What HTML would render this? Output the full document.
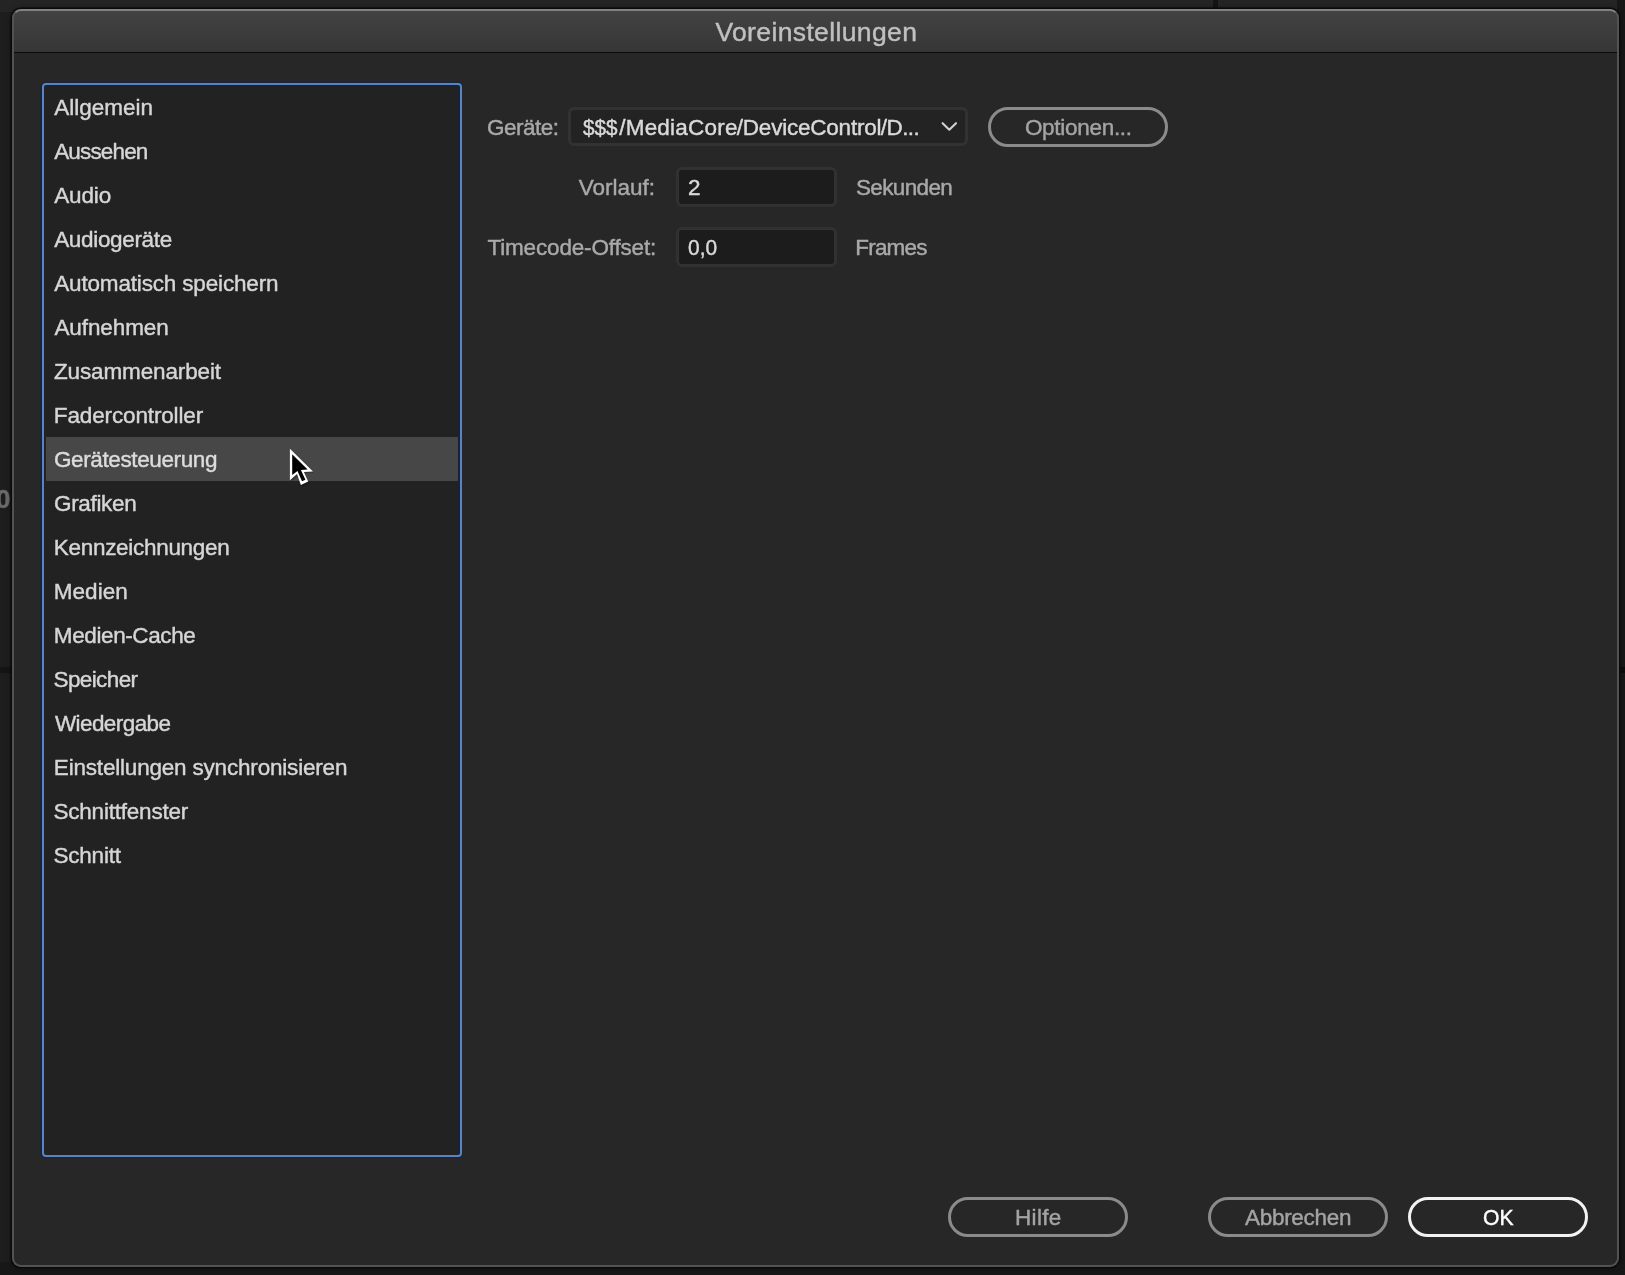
<!DOCTYPE html>
<html lang="de"><head><meta charset="utf-8"><title>Voreinstellungen</title>
<style>
html,body{margin:0;padding:0}
body{width:1625px;height:1275px;overflow:hidden;background:#1d1d1d;position:relative;font-family:"Liberation Sans",sans-serif}
.t{position:absolute;white-space:nowrap;line-height:1;height:1.3em;display:block;-webkit-text-stroke:0.42px currentColor}
.abs{position:absolute}
#wrap{position:absolute;left:0;top:0;width:1625px;height:1275px;will-change:transform}
#dlg{position:absolute;left:12px;top:9px;width:1607px;height:1258px;border-radius:9px;background:#272727;box-shadow:0 0 0 1.5px #0a0a0a,0 0 4px 1px rgba(0,0,0,.45);overflow:hidden}
#tb{position:absolute;left:0;top:0;width:100%;height:43px;background:linear-gradient(#434343,#363636)}
#tbl{position:absolute;left:0;top:42.6px;width:100%;height:1.7px;background:#0a0a0a}
#rim{position:absolute;left:12px;top:9px;width:1607px;height:1258px;border-radius:9px;box-sizing:border-box;border:2px solid #525252;border-top:2px solid #828282;pointer-events:none}
#list{position:absolute;left:42px;top:83px;width:420px;height:1074px;box-sizing:border-box;border:2px solid #5a83c4;border-radius:4px;background:#222222;box-shadow:-1.5px 0 0 0 rgba(8,36,86,.85), inset -1.5px 0 0 0 rgba(8,36,86,.85), 0 -1px 0 0 rgba(8,36,86,.5), 0 1px 0 0 rgba(8,36,86,.5)}
#sel{position:absolute;left:46px;top:437px;width:412px;height:44px;background:#474747}
.btn{position:absolute;box-sizing:border-box;width:180px;height:40px;border:3px solid #8b8b8b;border-radius:20px}
.inp{position:absolute;box-sizing:border-box;background:#1c1c1c;border:3px solid #313131;border-radius:6px}
</style></head><body>
<div id="wrap">
<div class="abs" style="left:0;top:0;width:1625px;height:12px;background:#242424"></div>
<div class="abs" style="left:0;top:1262px;width:1625px;height:13px;background:#171717"></div>
<div class="abs" style="left:1213px;top:0;width:5px;height:8px;background:#141414"></div>
<div class="abs" style="left:0;top:667px;width:14px;height:6px;background:#141414"></div>
<div class="abs" style="left:1617px;top:0;width:8px;height:1275px;background:#171717"></div>
<div class="abs" style="left:1617px;top:667px;width:8px;height:6px;background:#0c0c0c"></div>
<span class="t" style="left:-4px;top:486px;font-size:26px;color:#6a6a6a;font-weight:bold">0</span>
<div id="dlg"><div id="tb"></div><div id="tbl"></div></div>
<div id="rim"></div>
<div id="list"></div>
<div id="sel"></div>

<span class="t" style="left:715.45px;top:18.77px;font-size:26.5px;color:#c0c0c0;letter-spacing:0.366px;">Voreinstellungen</span>
<span class="t" style="left:54.20px;top:97.00px;font-size:22.5px;color:#d6d6d6;letter-spacing:0.018px;">Allgemein</span>
<span class="t" style="left:54.14px;top:141.00px;font-size:22.5px;color:#d6d6d6;letter-spacing:-0.835px;">Aussehen</span>
<span class="t" style="left:54.20px;top:185.00px;font-size:22.5px;color:#d6d6d6;letter-spacing:-0.128px;">Audio</span>
<span class="t" style="left:54.20px;top:229.00px;font-size:22.5px;color:#d6d6d6;letter-spacing:-0.331px;">Audiogeräte</span>
<span class="t" style="left:54.20px;top:273.00px;font-size:22.5px;color:#d6d6d6;letter-spacing:-0.163px;">Automatisch speichern</span>
<span class="t" style="left:54.45px;top:317.00px;font-size:22.5px;color:#d6d6d6;letter-spacing:-0.101px;">Aufnehmen</span>
<span class="t" style="left:53.92px;top:361.00px;font-size:22.5px;color:#d6d6d6;letter-spacing:-0.125px;">Zusammenarbeit</span>
<span class="t" style="left:53.82px;top:405.00px;font-size:22.5px;color:#d6d6d6;letter-spacing:-0.137px;">Fadercontroller</span>
<span class="t" style="left:53.98px;top:449.00px;font-size:22.5px;color:#dcdcdc;letter-spacing:-0.381px;">Gerätesteuerung</span>
<span class="t" style="left:53.98px;top:493.00px;font-size:22.5px;color:#d6d6d6;letter-spacing:-0.337px;">Grafiken</span>
<span class="t" style="left:53.82px;top:537.00px;font-size:22.5px;color:#d6d6d6;letter-spacing:-0.301px;">Kennzeichnungen</span>
<span class="t" style="left:53.82px;top:581.00px;font-size:22.5px;color:#d6d6d6;letter-spacing:0.020px;">Medien</span>
<span class="t" style="left:53.82px;top:625.00px;font-size:22.5px;color:#d6d6d6;letter-spacing:-0.392px;">Medien-Cache</span>
<span class="t" style="left:53.49px;top:669.00px;font-size:22.5px;color:#d6d6d6;letter-spacing:-0.606px;">Speicher</span>
<span class="t" style="left:54.91px;top:713.00px;font-size:22.5px;color:#d6d6d6;letter-spacing:-0.578px;">Wiedergabe</span>
<span class="t" style="left:53.82px;top:757.00px;font-size:22.5px;color:#d6d6d6;letter-spacing:-0.190px;">Einstellungen synchronisieren</span>
<span class="t" style="left:53.49px;top:801.00px;font-size:22.5px;color:#d6d6d6;letter-spacing:-0.213px;">Schnittfenster</span>
<span class="t" style="left:53.49px;top:845.00px;font-size:22.5px;color:#d6d6d6;letter-spacing:-0.222px;">Schnitt</span>
<span class="t" style="left:487.08px;top:117.00px;font-size:22.5px;color:#a9a9a9;letter-spacing:-0.537px;">Geräte:</span>
<span class="t" style="left:578.77px;top:177.00px;font-size:22.5px;color:#a9a9a9;letter-spacing:-0.004px;">Vorlauf:</span>
<span class="t" style="left:487.48px;top:237.00px;font-size:22.5px;color:#a9a9a9;letter-spacing:-0.169px;">Timecode-Offset:</span>
<span class="t" style="left:856.03px;top:177.00px;font-size:22.5px;color:#a9a9a9;letter-spacing:-0.657px;">Sekunden</span>
<span class="t" style="left:855.33px;top:237.00px;font-size:22.5px;color:#a9a9a9;letter-spacing:-0.839px;">Frames</span>
<div class="inp" style="left:568.4px;top:106.8px;width:399.6px;height:39.7px;background:#232323;border:3px solid #323232;border-radius:6px"></div>
<svg class="abs" style="left:938px;top:118px" width="24" height="18" viewBox="0 0 24 18"><path d="M4.6 5.2 L11.3 11.7 L18 5.2" fill="none" stroke="#d2d2d2" stroke-width="2.1" stroke-linecap="round" stroke-linejoin="round"/></svg>
<span class="t" style="left:582.55px;top:117.00px;font-size:22.5px;color:#dadada;letter-spacing:0.000px;transform:scaleX(0.9166);transform-origin:0 50%;">$$$</span>
<span class="t" style="left:619.21px;top:117.00px;font-size:22.5px;color:#dadada;letter-spacing:0.214px;">/MediaCore</span>
<span class="t" style="left:736.78px;top:117.00px;font-size:22.5px;color:#dadada;letter-spacing:-0.217px;">/DeviceControl</span>
<span class="t" style="left:880.78px;top:117.00px;font-size:22.5px;color:#dadada;letter-spacing:-0.548px;">/D...</span>
<div class="btn" style="left:988px;top:107px"></div>
<span class="t" style="left:1024.92px;top:117.00px;font-size:22.5px;color:#a4a4a4;letter-spacing:-0.292px;">Optionen...</span>
<div class="inp" style="left:676px;top:167px;width:160.5px;height:40px"></div>
<div class="inp" style="left:676px;top:227px;width:160.5px;height:40px"></div>
<span class="t" style="left:687.89px;top:177.00px;font-size:22.5px;color:#dadada;letter-spacing:0.000px;">2</span>
<span class="t" style="left:688.42px;top:237.00px;font-size:22.5px;color:#dadada;letter-spacing:0.000px;transform:scaleX(0.9291);transform-origin:0 50%;">0,0</span>
<div class="btn" style="left:948px;top:1197px"></div>
<div class="btn" style="left:1208px;top:1197px"></div>
<div class="btn" style="left:1408px;top:1197px;border-color:#f2f2f2"></div>
<span class="t" style="left:1014.98px;top:1207.00px;font-size:22.5px;color:#a4a4a4;letter-spacing:0.332px;">Hilfe</span>
<span class="t" style="left:1244.94px;top:1207.00px;font-size:22.5px;color:#a4a4a4;letter-spacing:-0.275px;">Abbrechen</span>
<span class="t" style="left:1482.79px;top:1207.00px;font-size:22.5px;color:#ffffff;letter-spacing:0.000px;transform:scaleX(0.9390);transform-origin:0 50%;">OK</span>
<svg class="abs" style="left:280px;top:440px" width="50" height="56" viewBox="280 440 50 56">
<polygon points="291.6,452.4 291.6,481.3 298.2,476 302.2,486.6 309.2,483.4 305.1,473.4 314,473" fill="rgba(0,0,0,.25)"/>
<polygon points="289.9,448.8 289.9,480.3 297,474.1 300.9,484.9 308.2,481.6 303.9,471.9 313,471.5" fill="#ffffff"/>
<polygon points="292.2,454.3 292.2,475.1 297.5,471 302,481.2 305.4,479.7 300.9,469.9 307.6,469.5" fill="#000000"/>
</svg>
</div>
</body></html>
